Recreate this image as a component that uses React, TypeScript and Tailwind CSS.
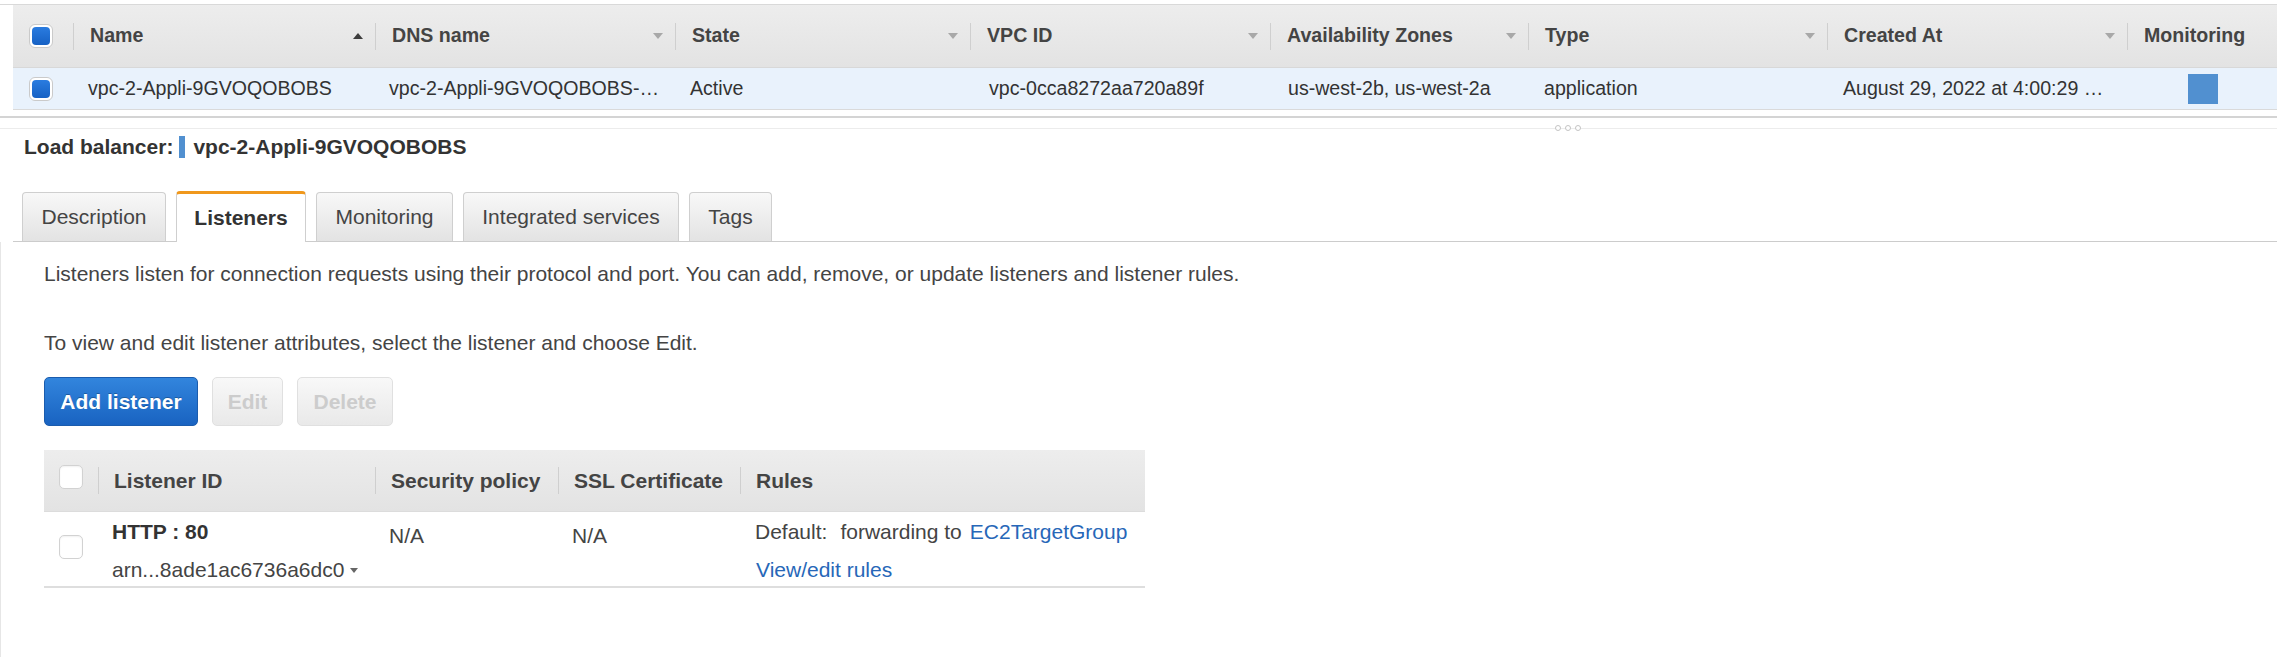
import type { ReactNode } from "react";

const topCols = "grid grid-cols-[60px_302px_300px_295px_300px_258px_299px_300px_1fr]";
const listenerCols = "grid grid-cols-[54px_277px_183px_182px_1fr]";

function SortArrow({ up = false, active = false }: { up?: boolean; active?: boolean }) {
  return (
    <svg width="10" height="6" viewBox="0 0 10 6" className="mr-[12px] ml-auto shrink-0">
      <path d={up ? "M0 6h10L5 0z" : "M0 0h10L5 6z"} fill={active ? "#3d3d3d" : "#a8a8a8"} />
    </svg>
  );
}

function Checkbox({ checked = false }: { checked?: boolean }) {
  if (checked) {
    return (
      <span className="flex size-[24px] shrink-0 rounded-[6px] border border-[#cacaca] bg-white p-[2px]">
        <span className="size-full rounded-[4px] bg-gradient-to-b from-[#2a7ce0] to-[#1661c4]" />
      </span>
    );
  }
  return (
    <span className="block size-[24px] shrink-0 rounded-[5px] border border-[#d2d2d2] bg-white shadow-[inset_0_1px_2px_rgba(0,0,0,0.06)]" />
  );
}

function HeadCell({ children, arrow, up, pad = "ml-[16px]" }: { children: ReactNode; arrow?: boolean; up?: boolean; pad?: string }) {
  return (
    <div className="flex items-center">
      <span className="h-[27px] w-px shrink-0 bg-[#cfcfcf]" />
      <span className={`${pad} whitespace-nowrap font-bold text-[#444]`}>{children}</span>
      {arrow && <SortArrow up={up} active={up} />}
    </div>
  );
}

function Tab({ label, width, active = false }: { label: string; width: string; active?: boolean }) {
  if (active) {
    return (
      <div
        className={`${width} -mb-px flex h-[51px] items-center justify-center rounded-t-[4px] border border-b-0 border-[#cfcfcf] border-t-[3px] border-t-[#f0981c] bg-white pb-[1px] font-bold text-[#333]`}
      >
        {label}
      </div>
    );
  }
  return (
    <div
      className={`${width} flex h-[49px] items-center justify-center rounded-t-[4px] border border-b-0 border-[#cfcfcf] bg-gradient-to-b from-[#f8f8f8] to-[#e3e3e3] text-[#444]`}
    >
      {label}
    </div>
  );
}

export default function App() {
  return (
    <div className="h-[657px] w-full overflow-hidden bg-white font-['Liberation_Sans',Arial,sans-serif] text-[#444]">
      {/* load balancer list */}
      <div className="pt-[4px]">
        <div className="border-t border-[#d9d9d9]">
          <div className="ml-[13px] text-[19.6px]">
            <div className={`${topCols} h-[63px] border-b border-[#d8d8d8] bg-gradient-to-b from-[#ededed] to-[#e3e3e3]`}>
              <div className="flex items-center pl-[16px]">
                <Checkbox checked />
              </div>
              <HeadCell arrow up>Name</HeadCell>
              <HeadCell arrow>DNS name</HeadCell>
              <HeadCell arrow>State</HeadCell>
              <HeadCell arrow>VPC ID</HeadCell>
              <HeadCell arrow>Availability Zones</HeadCell>
              <HeadCell arrow>Type</HeadCell>
              <HeadCell arrow>Created At</HeadCell>
              <HeadCell>Monitoring</HeadCell>
            </div>
            <div className={`${topCols} h-[42px] border-b border-[#dadada] bg-[#e9f2fc] text-[#333]`}>
              <div className="flex items-center pl-[16px]">
                <Checkbox checked />
              </div>
              <div className="flex items-center whitespace-nowrap pl-[15px]">vpc-2-Appli-9GVOQOBOBS</div>
              <div className="flex items-center whitespace-nowrap pl-[14px]">vpc-2-Appli-9GVOQOBOBS-…</div>
              <div className="flex items-center whitespace-nowrap pl-[15px]">Active</div>
              <div className="flex items-center whitespace-nowrap pl-[19px]">vpc-0cca8272aa720a89f</div>
              <div className="flex items-center whitespace-nowrap pl-[18px]">us-west-2b, us-west-2a</div>
              <div className="flex items-center whitespace-nowrap pl-[16px]">application</div>
              <div className="flex items-center whitespace-nowrap pl-[16px]">August 29, 2022 at 4:00:29 …</div>
              <div className="flex items-center pl-[61px]">
                <span className="size-[30px] bg-[#5190d0]" />
              </div>
            </div>
          </div>
        </div>
        <div className="mt-[6px] h-[2px] bg-[#d4d4d4]" />
        <div className="relative mt-[10px] h-px bg-[#ececec]">
          <div className="absolute left-[1555px] top-[-3px] flex gap-[4px]">
            <span className="size-[6px] rounded-full border border-[#c4c4c4] bg-white" />
            <span className="size-[6px] rounded-full border border-[#c4c4c4] bg-white" />
            <span className="size-[6px] rounded-full border border-[#c4c4c4] bg-white" />
          </div>
        </div>
      </div>

      {/* detail pane */}
      <div className="text-[21px]">
        <div className="mt-[6px] flex h-[24px] items-center pl-[24px] font-bold text-[#333]">
          <span>Load balancer:</span>
          <span className="ml-[6px] h-[22px] w-[6px] bg-[#5190d0]" />
          <span className="ml-[8px]">vpc-2-Appli-9GVOQOBOBS</span>
        </div>

        <div className="mt-[32px] ml-[13px] flex items-end gap-[10px] border-b border-[#cccccc] pl-[9px]">
          <Tab label="Description" width="w-[144px]" />
          <Tab label="Listeners" width="w-[130px]" active />
          <Tab label="Monitoring" width="w-[137px]" />
          <Tab label="Integrated services" width="w-[216px]" />
          <Tab label="Tags" width="w-[83px]" />
        </div>

        <div className="h-[420px] border-l border-[#e6e6e6] pl-[43px] pt-[20px] leading-[24px]">
          <p>Listeners listen for connection requests using their protocol and port. You can add, remove, or update listeners and listener rules.</p>
          <p className="mt-[45px]">To view and edit listener attributes, select the listener and choose Edit.</p>

          <div className="mt-[22px] flex gap-[14px]">
            <button className="h-[49px] w-[154px] rounded-[5px] border border-[#1b5cad] bg-gradient-to-b from-[#3285dd] to-[#1963c1] font-bold text-white [text-shadow:0_-1px_0_rgba(0,0,0,0.25)]">
              Add listener
            </button>
            <button className="h-[49px] w-[71px] rounded-[5px] border border-[#e0e0e0] bg-gradient-to-b from-[#f8f8f8] to-[#e9e9e9] font-bold text-[#cccccc]">
              Edit
            </button>
            <button className="h-[49px] w-[96px] rounded-[5px] border border-[#e0e0e0] bg-gradient-to-b from-[#f8f8f8] to-[#e9e9e9] font-bold text-[#cccccc]">
              Delete
            </button>
          </div>

          <div className="mt-[24px] w-[1101px]">
            <div className={`${listenerCols} h-[62px] border-b border-[#dcdcdc] bg-gradient-to-b from-[#ededed] to-[#e3e3e3]`}>
              <div className="flex pl-[15px] pt-[15px]">
                <Checkbox />
              </div>
              <HeadCell pad="ml-[15px]">Listener ID</HeadCell>
              <HeadCell pad="ml-[15px]">Security policy</HeadCell>
              <HeadCell pad="ml-[15px]">SSL Certificate</HeadCell>
              <HeadCell pad="ml-[15px]">Rules</HeadCell>
            </div>
            <div className={`${listenerCols} h-[76px] border-b-2 border-[#dedede] text-[#444]`}>
              <div className="pl-[15px] pt-[23px]">
                <Checkbox />
              </div>
              <div className="pl-[14px] pt-[8px]">
                <div className="font-bold text-[#333]">HTTP : 80</div>
                <div className="mt-[14px] flex items-center whitespace-nowrap">
                  arn...8ade1ac6736a6dc0
                  <svg width="8" height="5" viewBox="0 0 8 5" className="ml-[6px]">
                    <path d="M0 0h8L4 5z" fill="#666" />
                  </svg>
                </div>
              </div>
              <div className="pl-[14px] pt-[12px]">N/A</div>
              <div className="pl-[14px] pt-[12px]">N/A</div>
              <div className="pl-[15px] pt-[8px] whitespace-nowrap">
                <div>
                  <span>Default:</span>
                  <span className="ml-[13px]">forwarding to</span>
                  <span className="ml-[8px] text-[#2767b8]">EC2TargetGroup</span>
                </div>
                <div className="mt-[14px] pl-[1px] text-[#2767b8]">View/edit rules</div>
              </div>
            </div>
          </div>
        </div>
      </div>
    </div>
  );
}
